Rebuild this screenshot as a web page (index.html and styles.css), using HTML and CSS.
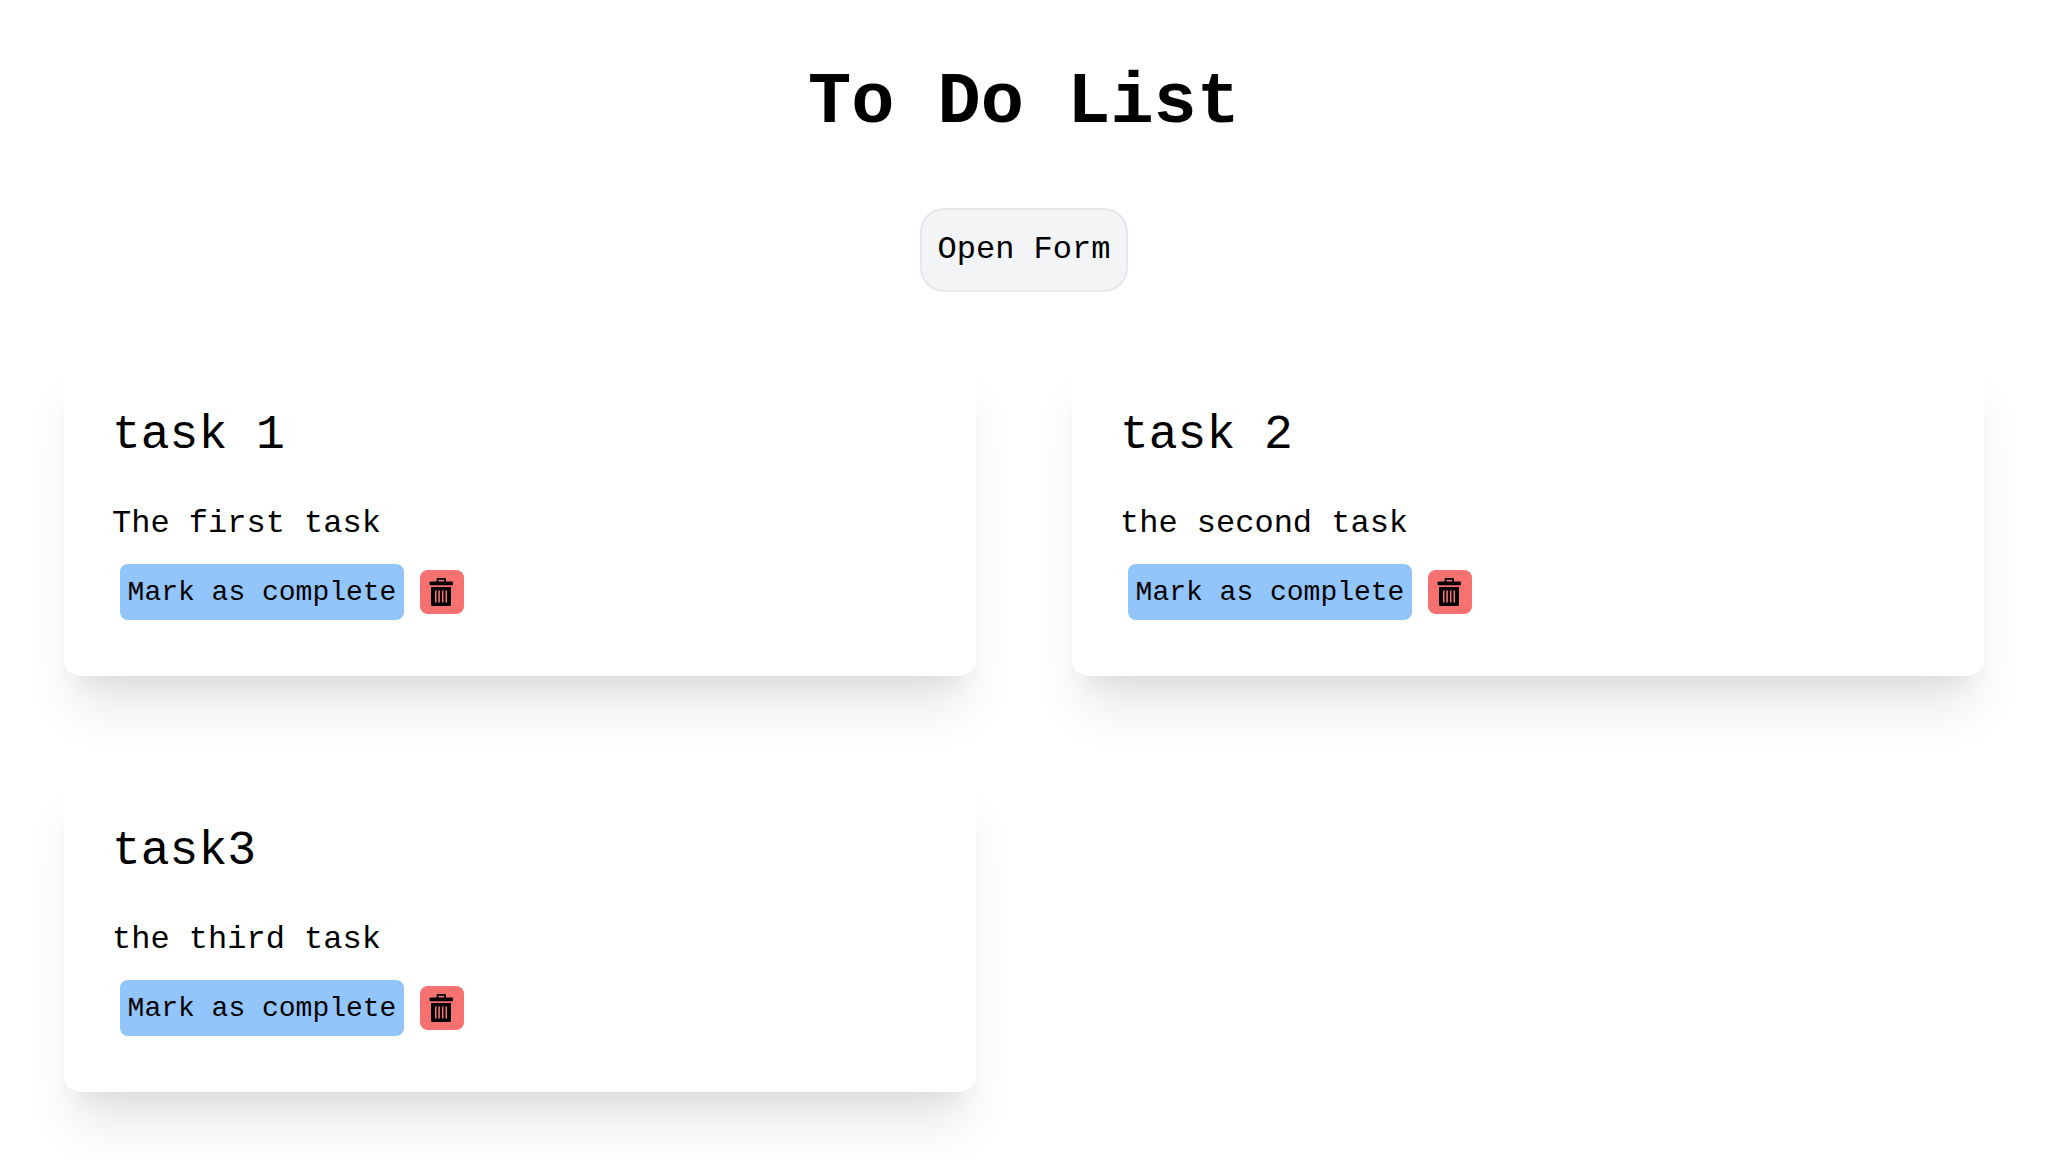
FILE: index.html
```html
<!DOCTYPE html>
<html lang="en">
<head>
<meta charset="utf-8">
<meta name="viewport" content="width=device-width, initial-scale=1">
<title>To Do List</title>
<link rel="stylesheet" href="styles.css">
</head>
<body>
<svg class="sprite" aria-hidden="true">
  <symbol id="trash" viewBox="0 0 28 28">
    <path fill-rule="evenodd" d="M1.500 6V4.800Q1.500 3.500 2.500 3.500H8.600V1.200Q8.600 0 9.800 0H16.700Q18 0 18 1.200V3.500H23.700Q25 3.500 25 4.800V6Q25 7.200 23.700 7.200H2.500Q1.500 7.200 1.500 6ZM10.400 1.700V3.500H16.200V1.700Z"/>
    <path fill-rule="evenodd" d="M3 9H23V26.500Q23 28 21.500 28H4.500Q3 28 3 26.500ZM7 12.500V24.500H8.500V12.500ZM10.300 12.500V24.500H11.900V12.500ZM13.900 12.500V24.500H15.500V12.500ZM17.500 12.500V24.500H19V12.500Z"/>
  </symbol>
</svg>
<main class="page">
  <h1 class="title">To Do List</h1>
  <button class="open-form" type="button">Open Form</button>
  <section class="tasks">
    <article class="card">
      <h2 class="card-title">task 1</h2>
      <p class="card-text">The first task</p>
      <div class="actions">
        <button class="complete" type="button">Mark as complete</button>
        <button class="delete" type="button" aria-label="Delete task"><svg class="icon"><use href="#trash"/></svg></button>
      </div>
    </article>
    <article class="card">
      <h2 class="card-title">task 2</h2>
      <p class="card-text">the second task</p>
      <div class="actions">
        <button class="complete" type="button">Mark as complete</button>
        <button class="delete" type="button" aria-label="Delete task"><svg class="icon"><use href="#trash"/></svg></button>
      </div>
    </article>
    <article class="card">
      <h2 class="card-title">task3</h2>
      <p class="card-text">the third task</p>
      <div class="actions">
        <button class="complete" type="button">Mark as complete</button>
        <button class="delete" type="button" aria-label="Delete task"><svg class="icon"><use href="#trash"/></svg></button>
      </div>
    </article>
  </section>
</main>
</body>
</html>
```
FILE: styles.css
```css
* {
  box-sizing: border-box;
  margin: 0;
}

body {
  background: #fff;
  color: #000;
  font-family: "Liberation Mono", "Courier New", monospace;
  font-size: 32px;
  line-height: 48px;
}

button {
  border: 0;
  color: inherit;
  font: inherit;
  cursor: pointer;
}

.sprite {
  display: none;
}

.page {
  display: flex;
  flex-direction: column;
  align-items: center;
  gap: 64px;
  padding: 64px;
}

.title {
  padding-bottom: 2px;
  font-size: 72px;
  font-weight: 700;
  line-height: 78px;
}

.open-form {
  padding: 16px;
  border: 2px solid #e5e7eb;
  border-radius: 24px;
  background: #f3f4f6;
}

.tasks {
  display: grid;
  grid-template-columns: repeat(2, minmax(0, 1fr));
  gap: 96px;
  width: 100%;
}

.card {
  padding: 48px;
  border-radius: 16px;
  background: #fff;
  box-shadow: 0 40px 50px -10px rgba(0, 0, 0, 0.1), 0 20px 20px -10px rgba(0, 0, 0, 0.04);
}

.card-title {
  margin-bottom: 34px;
  font-size: 48px;
  font-weight: 400;
  line-height: 62px;
}

.actions {
  display: flex;
  align-items: center;
  gap: 16px;
  padding: 16px 8px 8px;
}

.complete {
  width: 284px;
  padding: 9px 7px 7px;
  border-radius: 8px;
  background: #93c5fd;
  font-size: 28px;
  line-height: 40px;
  white-space: nowrap;
}

.delete {
  padding: 8px;
  border-radius: 8px;
  background: #f87171;
}

.icon {
  display: block;
  width: 28px;
  height: 28px;
}
```
